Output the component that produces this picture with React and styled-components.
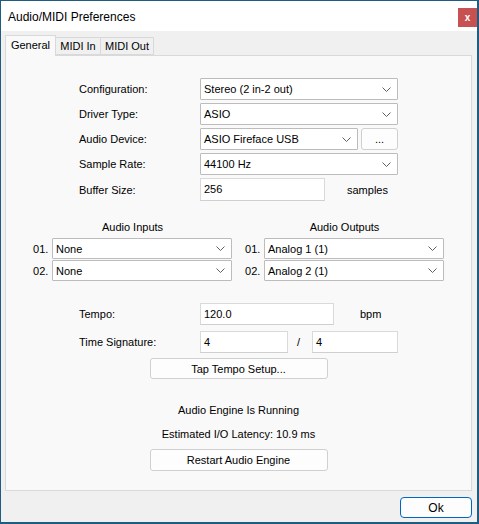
import React from 'react';
import styled, { createGlobalStyle } from 'styled-components';

const Global = createGlobalStyle`
  html, body {
    margin: 0;
    padding: 0;
    background: #f0f0f0;
  }
  * { box-sizing: border-box; }
`;

const Window = styled.div`
  width: 479px;
  height: 524px;
  display: flex;
  flex-direction: column;
  border-style: solid;
  border-color: #1f5c7f;
  border-width: 1px 2px 2px 1px;
  font-family: "Liberation Sans", Arial, sans-serif;
  font-size: 11px;
  color: #000;
  background: #f0f0f0;
`;

const TitleBar = styled.div`
  height: 30px;
  background: #fff;
  display: flex;
  align-items: flex-start;
  justify-content: space-between;
  padding-left: 7px;
`;

const Title = styled.div`
  font-size: 12px;
  line-height: 14px;
  margin-top: 9px;
  color: #000;
`;

const CloseBtn = styled.div`
  width: 19px;
  height: 19px;
  margin-top: 7px;
  background: #c75050;
  color: #fff;
  font-weight: bold;
  font-size: 10px;
  display: flex;
  align-items: center;
  justify-content: center;
`;

const Body = styled.div`
  flex: 1;
  display: flex;
  flex-direction: column;
  padding: 4px 5px 0 4px;
`;

const Tabs = styled.div`
  display: flex;
  align-items: flex-end;
  height: 20px;
  position: relative;
  z-index: 1;
`;

const Tab = styled.div`
  width: ${p => p.$w}px;
  height: ${p => (p.$active ? '21px' : '18px')};
  margin-bottom: ${p => (p.$active ? '-1px' : '0')};
  background: ${p => (p.$active ? '#f9f9f9' : '#f0f0f0')};
  border: 1px solid #d9d9d9;
  border-bottom: ${p => (p.$active ? 'none' : '1px solid #d9d9d9')};
  border-left-width: ${p => (p.$active ? '1px' : '0')};
  display: flex;
  align-items: center;
  justify-content: center;
  font-size: 11px;
  padding-bottom: ${p => (p.$active ? '2px' : '0')};
`;

const Panel = styled.div`
  height: 436px;
  background: #f9f9f9;
  border: 1px solid #d9d9d9;
  padding-top: 22px;
  display: flex;
  flex-direction: column;
`;

const FormGrid = styled.div`
  display: grid;
  grid-template-columns: 121px 198px;
  row-gap: ${p => p.$gap || 3}px;
  padding-left: 73px;
  margin-top: ${p => p.$mt || 0}px;
  align-items: center;
`;

const Label = styled.div`
  line-height: 14px;
`;

const Combo = styled.div`
  height: ${p => p.$h || 22}px;
  width: ${p => (p.$w ? `${p.$w}px` : 'auto')};
  flex: ${p => (p.$w ? 'none' : '1')};
  background: #fff;
  border: 1px solid #bcbcbc;
  border-radius: 1px;
  display: flex;
  align-items: center;
  justify-content: space-between;
  padding: 0 6px 0 3px;
`;

const Chevron = () => (
  <svg width="9" height="5" viewBox="0 0 9 5">
    <polyline points="0.5,0.5 4.5,4.5 8.5,0.5" fill="none" stroke="#606060" strokeWidth="1" />
  </svg>
);

const Select = ({ children, w, h }) => (
  <Combo $w={w} $h={h}>
    <span>{children}</span>
    <Chevron />
  </Combo>
);

const TextBox = styled.div`
  width: ${p => p.$w}px;
  height: ${p => p.$h || 22}px;
  flex: none;
  background: #fff;
  border: 1px solid #dadada;
  border-bottom-color: #cfcfcf;
  padding: 3px 2px 0 3px;
  line-height: 14px;
`;

const Cell = styled.div`
  display: flex;
  align-items: center;
  gap: ${p => p.$gap || 0}px;
  white-space: nowrap;
`;

const Unit = styled.div`
  margin-left: ${p => p.$ml}px;
`;

const Button = styled.div`
  width: ${p => p.$w}px;
  height: ${p => p.$h || 21}px;
  flex: none;
  background: #fdfdfd;
  border: 1px solid #d0d0d0;
  border-radius: 3px;
  display: flex;
  align-items: center;
  justify-content: center;
  align-self: ${p => (p.$center ? 'center' : 'auto')};
  margin-top: ${p => p.$mt || 0}px;
`;

const IOSection = styled.div`
  display: flex;
  gap: 13px;
  padding-left: 27px;
  margin-top: 19px;
`;

const IOGroup = styled.div`
  width: 199px;
  display: flex;
  flex-direction: column;
  gap: 1px;
`;

const IOHeader = styled.div`
  text-align: center;
  line-height: 14px;
  height: 17px;
`;

const IORow = styled.div`
  display: flex;
  align-items: center;
`;

const Num = styled.div`
  width: 19px;
`;

const Slash = styled.div`
  width: 25px;
  padding-left: 9px;
`;

const Status = styled.div`
  text-align: center;
  line-height: 14px;
  margin-top: ${p => p.$mt}px;
`;

const Footer = styled.div`
  display: flex;
  justify-content: flex-end;
  padding-top: 6px;
`;

const OkButton = styled.div`
  width: 72px;
  height: 21px;
  background: #fdfdfd;
  border: 1.5px solid #0067c0;
  border-radius: 4px;
  display: flex;
  align-items: center;
  justify-content: center;
  font-size: 12px;
`;

const inputs = ['None', 'None'];
const outputs = ['Analog 1 (1)', 'Analog 2 (1)'];

function App() {
  return (
    <Window>
      <Global />
      <TitleBar>
        <Title>Audio/MIDI Preferences</Title>
        <CloseBtn>x</CloseBtn>
      </TitleBar>
      <Body>
        <Tabs>
          <Tab $active $w={51}>General</Tab>
          <Tab $w={45}>MIDI In</Tab>
          <Tab $w={53}>MIDI Out</Tab>
        </Tabs>
        <Panel>
          <FormGrid>
            <Label>Configuration:</Label>
            <Select>Stereo (2 in-2 out)</Select>
            <Label>Driver Type:</Label>
            <Select>ASIO</Select>
            <Label>Audio Device:</Label>
            <Cell $gap={3}>
              <Select>ASIO Fireface USB</Select>
              <Button $w={37} $h={22}>...</Button>
            </Cell>
            <Label>Sample Rate:</Label>
            <Select>44100 Hz</Select>
            <Label>Buffer Size:</Label>
            <Cell>
              <TextBox $w={125} $h={23}>256</TextBox>
              <Unit $ml={22}>samples</Unit>
            </Cell>
          </FormGrid>

          <IOSection>
            <IOGroup>
              <IOHeader>Audio Inputs</IOHeader>
              {inputs.map((v, i) => (
                <IORow key={i}>
                  <Num>0{i + 1}.</Num>
                  <Select w={180} h={21}>{v}</Select>
                </IORow>
              ))}
            </IOGroup>
            <IOGroup>
              <IOHeader>Audio Outputs</IOHeader>
              {outputs.map((v, i) => (
                <IORow key={i}>
                  <Num>0{i + 1}.</Num>
                  <Select w={180} h={21}>{v}</Select>
                </IORow>
              ))}
            </IOGroup>
          </IOSection>

          <FormGrid $gap={6} $mt={22}>
            <Label>Tempo:</Label>
            <Cell>
              <TextBox $w={134}>120.0</TextBox>
              <Unit $ml={26}>bpm</Unit>
            </Cell>
            <Label>Time Signature:</Label>
            <Cell>
              <TextBox $w={88}>4</TextBox>
              <Slash>/</Slash>
              <TextBox $w={86}>4</TextBox>
            </Cell>
          </FormGrid>

          <Button $w={178} $center $mt={5}>Tap Tempo Setup...</Button>

          <Status $mt={24}>Audio Engine Is Running</Status>
          <Status $mt={10}>Estimated I/O Latency: 10.9 ms</Status>
          <Button $w={178} $h={22} $center $mt={8}>Restart Audio Engine</Button>
        </Panel>
        <Footer>
          <OkButton>Ok</OkButton>
        </Footer>
      </Body>
    </Window>
  );
}

export default App;
